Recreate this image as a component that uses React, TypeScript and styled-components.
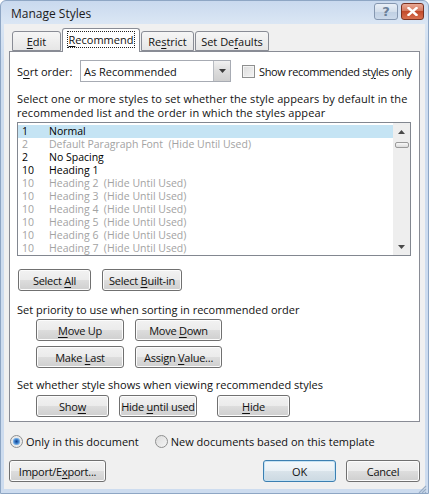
import React from "react";
import styled, { createGlobalStyle } from "styled-components";

const GlobalStyle = createGlobalStyle`
  html, body {
    margin: 0;
    padding: 0;
    background: #ffffff;
  }
  body {
    font-family: "Open Sans", "Noto Sans", sans-serif;
    font-size: 11px;
    color: #111;
  }
`;

const rows = [
  { n: "1", name: "Normal", dim: false },
  { n: "2", name: "Default Paragraph Font  (Hide Until Used)", dim: true },
  { n: "2", name: "No Spacing", dim: false },
  { n: "10", name: "Heading 1", dim: false },
  { n: "10", name: "Heading 2  (Hide Until Used)", dim: true },
  { n: "10", name: "Heading 3  (Hide Until Used)", dim: true },
  { n: "10", name: "Heading 4  (Hide Until Used)", dim: true },
  { n: "10", name: "Heading 5  (Hide Until Used)", dim: true },
  { n: "10", name: "Heading 6  (Hide Until Used)", dim: true },
  { n: "10", name: "Heading 7  (Hide Until Used)", dim: true },
];

type BtnProps = { w: number; isDefault?: boolean; extra?: number; children: React.ReactNode };

function Btn({ w, isDefault, extra, children }: BtnProps) {
  return (
    <ButtonFace $w={w} $default={isDefault} $extra={extra}>
      <span>{children}</span>
    </ButtonFace>
  );
}

function App() {
  return (
    <>
      <GlobalStyle />
      <Window>
        <TitleBar>
          <Title>Manage Styles</Title>
          <TitleButtons>
            <HelpButton>?</HelpButton>
            <CloseButton>
              <svg width="11" height="9" viewBox="0 0 11 9">
                <path d="M1.5 1 L9.5 8 M9.5 1 L1.5 8" stroke="#fff" strokeWidth="2.4" strokeLinecap="square" />
              </svg>
            </CloseButton>
          </TitleButtons>
        </TitleBar>
        <Client>
          <TabRow>
            <Tab $w={49}><span><U>E</U>dit</span></Tab>
            <Tab $w={78} $active>
              <Focus><U>R</U>ecommend</Focus>
            </Tab>
            <Tab $w={53}><span>Re<U>s</U>trict</span></Tab>
            <Tab $w={74}><span>Set De<U>f</U>aults</span></Tab>
          </TabRow>
          <Panel>
            <SortRow>
              <SortLabel>S<U>o</U>rt order:</SortLabel>
              <Combo>
                <ComboText>As Recommended</ComboText>
                <ComboArrow>
                  <svg width="7" height="4" viewBox="0 0 7 4">
                    <path d="M0 0 H7 L3.5 4 Z" fill="#3b3b3b" />
                  </svg>
                </ComboArrow>
              </Combo>
              <CheckBox />
              <CheckLabel>Show recommended st<U>y</U>les only</CheckLabel>
            </SortRow>
            <Description>
              Select one or more styles to set whether the style appears by default in the
              <br />
              recommended list and the order in which the styles appear
            </Description>
            <ListBox>
              <ListRows>
                {rows.map((r, i) => (
                  <ListRow key={i} $selected={i === 0} $dim={r.dim}>
                    <RowNum>{r.n}</RowNum>
                    <RowName>{r.name}</RowName>
                  </ListRow>
                ))}
              </ListRows>
              <ScrollBar>
                <ScrollArrow>
                  <svg width="7" height="4" viewBox="0 0 7 4">
                    <path d="M0 4 H7 L3.5 0 Z" fill="#4a4a4a" />
                  </svg>
                </ScrollArrow>
                <Thumb />
                <ScrollTrack />
                <ScrollArrow>
                  <svg width="7" height="4" viewBox="0 0 7 4">
                    <path d="M0 0 H7 L3.5 4 Z" fill="#4a4a4a" />
                  </svg>
                </ScrollArrow>
              </ScrollBar>
            </ListBox>
            <ButtonRow $top={13} $indent={1} $gap={11}>
              <Btn w={73}>Select <U>A</U>ll</Btn>
              <Btn w={80}>Select <U>B</U>uilt-in</Btn>
            </ButtonRow>
            <Caption $top={12}>Set priority to use when sorting in recommended order</Caption>
            <ButtonGrid>
              <Btn w={88}><U>M</U>ove Up</Btn>
              <Btn w={87}>Move <U>D</U>own</Btn>
              <Btn w={88}>Make <U>L</U>ast</Btn>
              <Btn w={87}>Assign <U>V</U>alue...</Btn>
            </ButtonGrid>
            <Caption $top={10}>Set whether style shows when viewing recommended styles</Caption>
            <ButtonRow $top={3} $indent={19} $gap={10}>
              <Btn w={73}>Sho<U>w</U></Btn>
              <Btn w={78}>Hide <U>u</U>ntil used</Btn>
              <Btn w={73} extra={10}><U>H</U>ide</Btn>
            </ButtonRow>
          </Panel>
          <RadioRow>
            <RadioItem>
              <Radio $checked />
              <span>Only in this document</span>
            </RadioItem>
            <RadioItem>
              <Radio />
              <span>New documents based on this template</span>
            </RadioItem>
          </RadioRow>
          <Footer>
            <Btn w={97}>Import/E<U>x</U>port...</Btn>
            <Spacer />
            <Btn w={73} isDefault>OK</Btn>
            <Btn w={74}>Cancel</Btn>
          </Footer>
        </Client>
        <Grip>
          <svg width="10" height="10" viewBox="0 0 10 10">
            <path d="M9 2 L2 9 M9 5 L5 9 M9 8 L8 9" stroke="#9aaec6" strokeWidth="1.2" />
          </svg>
        </Grip>
      </Window>
    </>
  );
}

export default App;

const Window = styled.div`
  position: relative;
  width: 429px;
  height: 494px;
  box-sizing: border-box;
  display: flex;
  flex-direction: column;
  border: 1px solid #8ea6c4;
  border-radius: 6px 6px 0 0;
  background: linear-gradient(180deg, #c9d9ee 0px, #dae6f4 22px, #cddcef 60px, #cddcef 100%);
  overflow: hidden;
`;

const TitleBar = styled.div`
  height: 23px;
  display: flex;
  align-items: center;
  justify-content: space-between;
  padding: 0 4px 0 10px;
`;

const Title = styled.div`
  font-size: 12px;
  color: #1b1b1b;
  margin-top: 1px;
`;

const TitleButtons = styled.div`
  display: flex;
  gap: 3px;
  align-self: flex-start;
  margin-top: 2px;
`;

const HelpButton = styled.div`
  width: 24px;
  height: 17px;
  box-sizing: border-box;
  border: 1px solid #8597b0;
  border-radius: 3px;
  background: linear-gradient(180deg, #e9eff7 0%, #d3deeb 50%, #bfcfe2 51%, #cbd9ea 100%);
  color: #6b7f98;
  font-family: "DejaVu Sans", sans-serif;
  font-weight: bold;
  font-size: 13px;
  line-height: 15px;
  text-align: center;
`;

const CloseButton = styled.div`
  width: 23px;
  height: 17px;
  box-sizing: border-box;
  border: 1px solid #7a3222;
  border-radius: 3px;
  background: linear-gradient(180deg, #e9a996 0%, #d57a60 45%, #c24a2c 50%, #d8704f 100%);
  display: flex;
  align-items: center;
  justify-content: center;
`;

const Client = styled.div`
  flex: 1;
  margin: 0 3px 4px 3px;
  padding: 0 5px;
  background: #f0f0f0;
  display: flex;
  flex-direction: column;
`;

const TabRow = styled.div`
  margin-top: 5px;
  height: 22px;
  display: flex;
  align-items: flex-end;
  gap: 1px;
  padding-left: 3px;
  position: relative;
  z-index: 1;
`;

const Tab = styled.div<{ $w: number; $active?: boolean }>`
  width: ${(p) => p.$w}px;
  height: ${(p) => (p.$active ? 24 : 20)}px;
  margin-bottom: ${(p) => (p.$active ? -1 : 0)}px;
  box-sizing: border-box;
  border: 1px solid #898c95;
  border-bottom: ${(p) => (p.$active ? "none" : "1px solid #898c95")};
  border-radius: 3px 3px 0 0;
  background: ${(p) => (p.$active ? "#ffffff" : "linear-gradient(180deg, #f6f6f6 0%, #e6e6e6 100%)")};
  display: flex;
  align-items: center;
  justify-content: center;
  font-size: 11px;
  white-space: nowrap;
  padding-bottom: ${(p) => (p.$active ? 2 : 0)}px;
`;

const Focus = styled.span`
  outline: 1px dotted #222;
  padding: 0 1px;
  line-height: 15px;
`;

const U = styled.span`
  text-decoration: underline;
  text-underline-offset: 2px;
`;

const Panel = styled.div`
  border: 1px solid #898c95;
  background: #ffffff;
  padding: 8px 8px 4px 7px;
  display: flex;
  flex-direction: column;
`;

const SortRow = styled.div`
  height: 22px;
  display: flex;
  align-items: center;
  white-space: nowrap;
  & > * {
    flex-shrink: 0;
  }
`;

const SortLabel = styled.div`
  width: 63px;
`;

const Combo = styled.div`
  width: 151px;
  height: 22px;
  box-sizing: border-box;
  border: 1px solid #a7abb3;
  display: flex;
  align-items: stretch;
`;

const ComboText = styled.div`
  flex: 1;
  padding-left: 3px;
  display: flex;
  align-items: center;
`;

const ComboArrow = styled.div`
  width: 16px;
  border-left: 1px solid #b8bcc2;
  background: linear-gradient(180deg, #f1f1f1 0%, #dcdcdc 50%, #cfcfcf 100%);
  display: flex;
  align-items: center;
  justify-content: center;
`;

const CheckBox = styled.div`
  width: 13px;
  height: 13px;
  box-sizing: border-box;
  margin-left: 11px;
  border: 1px solid #8e8f8f;
  background: linear-gradient(135deg, #dcdcdc 0%, #f4f4f4 100%);
  box-shadow: inset 0 0 0 1px #f4f4f4;
`;

const CheckLabel = styled.div`
  margin-left: 4px;
  white-space: nowrap;
  letter-spacing: -0.35px;
`;

const Description = styled.div`
  margin-top: 10px;
  line-height: 14px;
  white-space: nowrap;
  letter-spacing: 0.1px;
`;

const ListBox = styled.div`
  margin-top: 2px;
  height: 134px;
  box-sizing: border-box;
  border: 1px solid #828790;
  display: flex;
`;

const ListRows = styled.div`
  flex: 1;
  padding-top: 2px;
  overflow: hidden;
`;

const ListRow = styled.div<{ $selected?: boolean; $dim?: boolean }>`
  height: 13px;
  line-height: 13px;
  font-size: 10.5px;
  display: flex;
  padding-left: 4px;
  white-space: pre;
  color: ${(p) => (p.$dim ? "#a3a3a3" : "#000")};
  background: ${(p) => (p.$selected ? "#c5e4f4" : "transparent")};
`;

const RowNum = styled.span`
  width: 27px;
`;

const RowName = styled.span``;

const ScrollBar = styled.div`
  width: 17px;
  background: #eeeeee;
  display: flex;
  flex-direction: column;
  align-items: center;
`;

const ScrollArrow = styled.div`
  height: 17px;
  display: flex;
  align-items: center;
  justify-content: center;
`;

const Thumb = styled.div`
  width: 14px;
  height: 6px;
  box-sizing: border-box;
  border: 1px solid #9a9a9a;
  border-radius: 2px;
  background: linear-gradient(180deg, #f8f8f8, #dcdcdc);
  margin-top: 2px;
`;

const ScrollTrack = styled.div`
  flex: 1;
`;

const ButtonRow = styled.div<{ $top: number; $indent: number; $gap: number }>`
  display: flex;
  margin-top: ${(p) => p.$top}px;
  margin-left: ${(p) => p.$indent}px;
  gap: ${(p) => p.$gap}px;
`;

const ButtonGrid = styled.div`
  margin-top: 2px;
  margin-left: 19px;
  display: grid;
  grid-template-columns: 88px 87px;
  column-gap: 11px;
  row-gap: 5px;
`;

const ButtonFace = styled.div<{ $w: number; $default?: boolean; $extra?: number }>`
  width: ${(p) => p.$w}px;
  height: 22px;
  margin-left: ${(p) => p.$extra ?? 0}px;
  box-sizing: border-box;
  border: 1px solid ${(p) => (p.$default ? "#3c7fb1" : "#707070")};
  border-radius: 3px;
  background: ${(p) =>
    p.$default
      ? "linear-gradient(180deg, #f4f8fb 0%, #e9f0f5 50%, #d9e3ea 51%, #ccd9e2 100%)"
      : "linear-gradient(180deg, #f2f2f2 0%, #ebebeb 50%, #dddddd 51%, #cfcfcf 100%)"};
  box-shadow: inset 0 0 0 1px ${(p) => (p.$default ? "#c5e2f3" : "#fcfcfc")};
  display: flex;
  align-items: center;
  justify-content: center;
  font-size: 11px;
  letter-spacing: -0.25px;
  white-space: nowrap;
`;

const Caption = styled.div<{ $top: number }>`
  margin-top: ${(p) => p.$top}px;
  line-height: 14px;
`;

const RadioRow = styled.div`
  margin-top: 12px;
  height: 14px;
  display: flex;
  align-items: center;
  gap: 15px;
`;

const RadioItem = styled.div`
  display: flex;
  align-items: center;
  gap: 3px;
  margin-left: 1px;
`;

const Radio = styled.div<{ $checked?: boolean }>`
  width: 13px;
  height: 13px;
  box-sizing: border-box;
  border-radius: 50%;
  border: 1px solid #8e8f8f;
  background: ${(p) =>
    p.$checked
      ? "radial-gradient(circle, #0f3f8c 0px, #3d7ec9 2px, #8fc0ec 3.5px, #e8e8e8 4px, #f6f6f6 100%)"
      : "linear-gradient(135deg, #dcdcdc 0%, #f4f4f4 100%)"};
`;

const Footer = styled.div`
  margin-top: 12px;
  display: flex;
  gap: 10px;
`;

const Spacer = styled.div`
  flex: 1;
`;

const Grip = styled.div`
  position: absolute;
  right: 1px;
  bottom: 1px;
  width: 10px;
  height: 10px;
`;
